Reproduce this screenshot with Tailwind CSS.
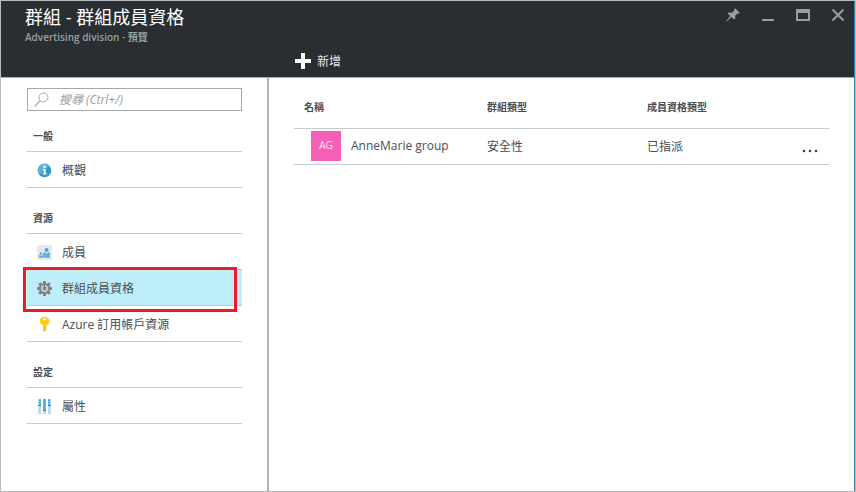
<!DOCTYPE html>
<html lang="zh-Hant">
<head>
<meta charset="utf-8">
<meta name="viewport" content="width=device-width, initial-scale=1">
<title>群組 - 群組成員資格</title>
<script src="https://cdn.jsdelivr.net/npm/@tailwindcss/browser@4"></script>
</head>
<body class="flex h-screen flex-col border border-[#b9bcbc] bg-white font-['Open_Sans','Noto_Sans_CJK_TC',sans-serif] text-xs text-[#4a4e53]">
<div class="flex min-h-0 flex-1 flex-col border-r border-[#2f84ad]">
  <header class="flex h-[77px] shrink-0 flex-col justify-between border-b border-[#a9abac] bg-[#292e32]">
    <div class="flex items-start justify-between pl-6 pr-[9px]">
      <div class="pt-1">
        <h1 class="text-lg leading-6 text-white">群組 - 群組成員資格</h1>
        <p class="text-[10px] font-semibold leading-4 text-[#9b9ea1]">Advertising division - 預覽</p>
      </div>
      <div class="flex gap-[21px] pt-[7px] text-[#9a9d9f]">
        <button type="button" aria-label="釘選" class="size-3.5">
          <svg viewBox="0 0 14 14" class="size-3.5" fill="currentColor"><path d="M9 0.2 L13.8 4.8 L12.6 5.8 L11.5 5.5 L9.2 7.8 L9.3 10.6 L8.2 11.6 L5.4 9 L0.8 13.6 L0.2 13.2 L4.2 7.9 L1.6 5.5 L2.8 4.6 L5.7 4.8 L8.4 2.5 L8.1 1.2 Z"/></svg>
        </button>
        <button type="button" aria-label="最小化" class="size-3.5">
          <svg viewBox="0 0 14 14" class="size-3.5" fill="currentColor"><path d="M1 11h12v2H1z"/></svg>
        </button>
        <button type="button" aria-label="最大化" class="size-3.5">
          <svg viewBox="0 0 14 14" class="size-3.5" fill="currentColor"><path fill-rule="evenodd" d="M0 1h14v12H0z M2 5v6h10V5z"/></svg>
        </button>
        <button type="button" aria-label="關閉" class="size-3.5">
          <svg viewBox="0 0 14 14" class="size-3.5" fill="none" stroke="currentColor" stroke-width="2"><path d="M1.5 1.5l11 11M12.5 1.5l-11 11"/></svg>
        </button>
      </div>
    </div>
    <div class="flex pb-[5px] pl-[294px]">
      <button type="button" class="flex items-center gap-1.5 text-white">
        <svg viewBox="0 0 16 16" class="size-4" fill="currentColor"><path d="M6 0h4v6h6v4h-6v6H6v-6H0V6h6z"/></svg>
        <span class="pt-0.5 leading-5 text-[#e4e5e6]">新增</span>
      </button>
    </div>
  </header>

  <div class="flex min-h-0 flex-1">
    <nav class="w-[268px] shrink-0 border-r-2 border-[#b0b2b3] pl-[26px] pr-[25px] pt-2.5">
      <label class="flex h-[23px] items-center border border-[#a5a8aa] pl-1.5">
        <svg viewBox="0 0 15 15" class="size-[15px] shrink-0" fill="none" stroke="#a5a8aa"><circle cx="9.5" cy="5.5" r="4.5"/><path d="M6.2 8.7L.8 14.2" stroke-width="1.3"/></svg>
        <input type="search" aria-label="搜尋" placeholder="搜尋 (Ctrl+/)" class="ml-2.5 min-w-0 flex-1 bg-transparent italic leading-5 outline-none placeholder:text-[#9a9da1]">
      </label>

      <h2 class="flex h-[41px] items-end border-b border-[#c8c9ca] pb-[7px] pl-1.5 text-[10px] font-semibold leading-4">一般</h2>
      <a href="#" class="flex h-9 items-center gap-2.5 border-b border-[#c8c9ca] pl-2.5 pt-0.5">
        <svg viewBox="0 0 15 15" class="size-[15px]"><circle cx="7.5" cy="7.5" r="6.8" fill="#3699c9"/><path d="M.7 7.5A6.8 6.8 0 0 1 12.3 2.7L2.7 12.3A6.8 6.8 0 0 1 .7 7.5z" fill="#59b4d9"/><circle cx="7.5" cy="3.7" r="1.2" fill="#fff"/><path d="M5.8 5.9h2.9v4.5h.9v1.2H5.8v-1.2h.9V7.1h-.9z" fill="#fff"/></svg>
        <span>概觀</span>
      </a>

      <h2 class="flex h-[46px] items-end border-b border-[#c8c9ca] pb-[7px] pl-1.5 text-[10px] font-semibold leading-4">資源</h2>
      <a href="#" class="flex h-9 items-center gap-2.5 border-b border-[#c8c9ca] pl-2.5 pt-0.5">
        <svg viewBox="0 0 15 15" class="size-[15px]"><path d="M0 0h15v15H0z" fill="#e6e8e9"/><circle cx="9.6" cy="4.9" r="2" fill="#45a9d4"/><path d="M6.3 12.8V8.3q0-1.3 1.3-1.3l2 1.8 2-1.8q1.3 0 1.3 1.3v4.5z" fill="#59b4d9"/><circle cx="4" cy="8.6" r="1.3" fill="#59b4d9"/><path d="M1.9 12.8v-2.7h1l1.1.9 1.1-.9h.8v2.7z" fill="#59b4d9"/></svg>
        <span>成員</span>
      </a>
      <a href="#" aria-current="page" class="relative flex h-9 items-center gap-2.5 border-b border-[#c8c9ca] bg-[#bfeefb] pl-2.5 pt-0.5">
        <svg viewBox="0 0 15 15" class="size-[15px]"><g fill="#808487"><path id="tooth" d="M6.2 0h2.6l.6 3H5.6zM5.6 12h3.8l-.6 3H6.2z"/><use href="#tooth" transform="rotate(45 7.5 7.5)"/><use href="#tooth" transform="rotate(90 7.5 7.5)"/><use href="#tooth" transform="rotate(135 7.5 7.5)"/><circle cx="7.5" cy="7.5" r="5.3"/></g><circle cx="7.5" cy="7.5" r="2.8" fill="#8f9497" stroke="#d5e6eb" stroke-width="1.2"/><path d="M6.8 3.8h1.4v3.6H6.8z" fill="#696e72"/></svg>
        <span>群組成員資格</span>
        <span class="pointer-events-none absolute -left-1 -top-[3px] right-[5px] h-[45px] border-3 border-[#ed1c24]"></span>
      </a>
      <a href="#" class="flex h-9 items-center gap-2.5 border-b border-[#c8c9ca] pl-2.5 pt-0.5">
        <svg viewBox="0 0 15 15" class="size-[15px]"><path fill-rule="evenodd" d="M5.2 0h4.6L12.5 2.6v3.2L9.6 8.5v1l-.8 1 .8 1-.8 1 .4.7L7.7 15 6 13.4V8.5L2.8 5.8V2.6z M7.6 1.1a1.1 1.1 0 1 0 .01 0z" fill="#fcd116"/><path d="M7 8h.9v5.5H7zM5 4.8h5v.9H5z" fill="#f2bd15"/></svg>
        <span>Azure 訂用帳戶資源</span>
      </a>

      <h2 class="flex h-[46px] items-end border-b border-[#c8c9ca] pb-[7px] pl-1.5 text-[10px] font-semibold leading-4">設定</h2>
      <a href="#" class="flex h-9 items-center gap-2.5 border-b border-[#c8c9ca] pl-2.5 pt-0.5">
        <svg viewBox="0 0 15 15" class="size-[15px]"><path d="M1 0h3v15H1zM6 0h3v15H6zM11 0h3v15h-3z" fill="#b8dff0"/><path d="M2 0h2v6H2zM6 0h3v11H6zM11 0h2v6h-2z" fill="#59b4d9"/><path d="M1 6h3v1H1zM6 11h3v1H6zM11 6h3v1h-3z" fill="#68747b"/></svg>
        <span>屬性</span>
      </a>
    </nav>

    <main class="min-w-0 flex-1 px-[25px] pt-2.5">
      <table class="w-full table-fixed border-collapse text-left">
        <thead>
          <tr class="h-10 border-b border-[#c8c9ca] text-[10px]">
            <th class="w-[193px] pl-2.5 font-semibold">名稱</th>
            <th class="w-40 font-semibold">群組類型</th>
            <th class="font-semibold">成員資格類型</th>
            <th class="w-7"></th>
          </tr>
        </thead>
        <tbody>
          <tr class="h-9 border-b border-[#c8c9ca]">
            <td class="pl-[17px]">
              <div class="flex items-center gap-2.5">
                <span class="flex size-[30px] items-center justify-center bg-[#f65fb8] text-[10px] text-white/85">AG</span>
                <a href="#">AnneMarie group</a>
              </div>
            </td>
            <td class="pt-0.5">安全性</td>
            <td class="pt-0.5">已指派</td>
            <td>
              <button type="button" aria-label="更多" class="mt-2.5 flex pl-px">
                <svg viewBox="0 0 16 4" class="h-1 w-4" fill="#3c4045"><circle cx="2" cy="2" r="1.3"/><circle cx="8" cy="2" r="1.3"/><circle cx="14" cy="2" r="1.3"/></svg>
              </button>
            </td>
          </tr>
        </tbody>
      </table>
    </main>
  </div>
</div>
</body>
</html>
